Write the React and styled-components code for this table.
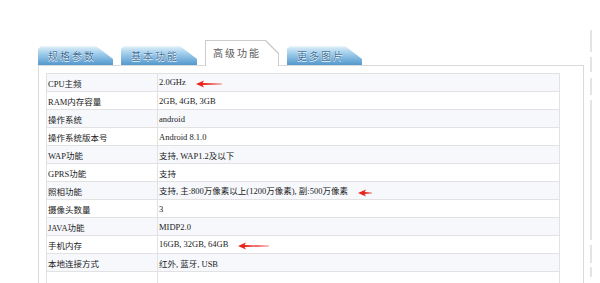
import React from 'react';
import styled, { createGlobalStyle } from 'styled-components';

const GlobalStyle = createGlobalStyle`
  body {
    margin: 0;
    background: #fff;
    overflow: hidden;
  }
`;

const specs = [
  { label: 'CPU主频', value: '2.0GHz', arrow: 26 },
  { label: 'RAM内存容量', value: '2GB, 4GB, 3GB' },
  { label: '操作系统', value: 'android' },
  { label: '操作系统版本号', value: 'Android 8.1.0' },
  { label: 'WAP功能', value: '支持, WAP1.2及以下' },
  { label: 'GPRS功能', value: '支持' },
  { label: '照相功能', value: '支持, 主:800万像素以上(1200万像素), 副:500万像素', arrow: 14 },
  { label: '摄像头数量', value: '3' },
  { label: 'JAVA功能', value: 'MIDP2.0' },
  { label: '手机内存', value: '16GB, 32GB, 64GB', arrow: 31 },
  { label: '本地连接方式', value: '红外, 蓝牙, USB' },
  { label: '', value: '' },
];

const tabs = [
  { name: '规格参数', width: 75 },
  { name: '基本功能', width: 76 },
  { name: '高级功能', width: 74, active: true },
  { name: '更多图片', width: 75 },
];

// gaps in the faint dashed line at the right edge of the page
const gutterSegments = [
  { top: 30, height: 22 },
  { top: 5, height: 15 },
  { top: 6, height: 17 },
  { top: 5, height: 140 },
  { top: 5, height: 18 },
  { top: 4, height: 10 },
];

function Arrow({ width }) {
  return (
    <ArrowSvg width={width} height="8" viewBox={`0 0 ${width} 8`}>
      <path
        d={`M0 4 L8 0.6 L6.6 3.1 L${width} 3.7 L${width} 4.3 L6.6 4.9 L8 7.4 Z`}
        fill="#e8261e"
      />
    </ArrowSvg>
  );
}

function App() {
  return (
    <Page>
      <GlobalStyle />
      <Main>
        <TabBar>
          {tabs.map((tab) =>
            tab.active ? (
              <ActiveTab key={tab.name} $width={tab.width}>
                <ActiveTabInner>{tab.name}</ActiveTabInner>
              </ActiveTab>
            ) : (
              <Tab key={tab.name} $width={tab.width}>
                {tab.name}
              </Tab>
            )
          )}
        </TabBar>
        <Panel>
          <SpecTable>
            <tbody>
              {specs.map((row, i) => (
                <Row key={i} $striped={i % 2 === 0}>
                  <LabelCell>{row.label}</LabelCell>
                  <ValueCell>
                    {row.value}
                    {row.arrow && <Arrow width={row.arrow} />}
                  </ValueCell>
                </Row>
              ))}
            </tbody>
          </SpecTable>
        </Panel>
      </Main>
      <Gutter>
        {gutterSegments.map((seg, i) => (
          <GutterSegment key={i} $top={seg.top} $height={seg.height} />
        ))}
      </Gutter>
    </Page>
  );
}

export default App;

const Page = styled.div`
  display: flex;
  height: 283px;
  padding-left: 38px;
  font-family: "Liberation Serif", "Noto Sans CJK SC", serif;
`;

const Main = styled.div`
  width: 546px;
  padding-top: 40px;
  display: flex;
  flex-direction: column;
`;

const TabBar = styled.div`
  display: flex;
  align-items: flex-end;
  gap: 8px;
  height: 26px;
  margin-bottom: -1px;
  position: relative;
  z-index: 1;
`;

const Tab = styled.div`
  width: ${(p) => p.$width}px;
  height: 19px;
  margin-bottom: 1px;
  box-sizing: border-box;
  padding-left: 10px;
  clip-path: polygon(0 3px, 3px 0, calc(100% - 17px) 0, 100% 13px, 100% 100%, 0 100%);
  background: linear-gradient(#f1f8fc 0, #d0e6f4 2px, #9fcdeb 40%, #5398cd 100%);
  color: #3d6f9a;
  text-shadow: 0 0 1px #fff, 0 1px 0 #e6f2fa;
  font-family: "Noto Sans CJK SC", sans-serif;
  font-size: 10px;
  letter-spacing: 2px;
  line-height: 20px;
`;

const ActiveTab = styled.div`
  width: ${(p) => p.$width}px;
  height: 26px;
  box-sizing: border-box;
  padding: 1px 1px 0 1px;
  background: #cbcbcb;
  clip-path: polygon(0 0, calc(100% - 13px) 0, 100% 13px, 100% 100%, 0 100%);
`;

const ActiveTabInner = styled.div`
  height: 100%;
  background: #fff;
  clip-path: polygon(0 0, calc(100% - 13px) 0, 100% 13px, 100% 100%, 0 100%);
  padding-left: 7px;
  color: #5a5a5a;
  font-family: "Noto Sans CJK SC", sans-serif;
  font-size: 10px;
  letter-spacing: 2px;
  line-height: 24px;
`;

const Panel = styled.div`
  flex: 1;
  border: 1px solid #dadada;
  border-bottom: none;
  padding: 7px 22px 0 7px;
  overflow: hidden;
`;

const SpecTable = styled.table`
  width: 514px;
  border-collapse: collapse;
  border: 1px solid #e2e2e2;
  font-size: 8.5px;
  color: #222;
`;

const Row = styled.tr`
  height: 18px;
  background: ${(p) => (p.$striped ? '#f6f8fc' : '#fff')};
`;

const LabelCell = styled.td`
  width: 108px;
  padding: 0 1px;
  border: 1px solid #e2e2e2;
  white-space: nowrap;
`;

const ValueCell = styled.td`
  padding: 0 1px;
  border: 1px solid #e2e2e2;
  white-space: nowrap;
`;

const ArrowSvg = styled.svg`
  vertical-align: middle;
  margin-left: 10px;
`;

const Gutter = styled.div`
  margin-left: 6px;
  display: flex;
  flex-direction: column;
`;

const GutterSegment = styled.div`
  width: 1.5px;
  margin-top: ${(p) => p.$top}px;
  height: ${(p) => p.$height}px;
  background: #e4e4e4;
`;
